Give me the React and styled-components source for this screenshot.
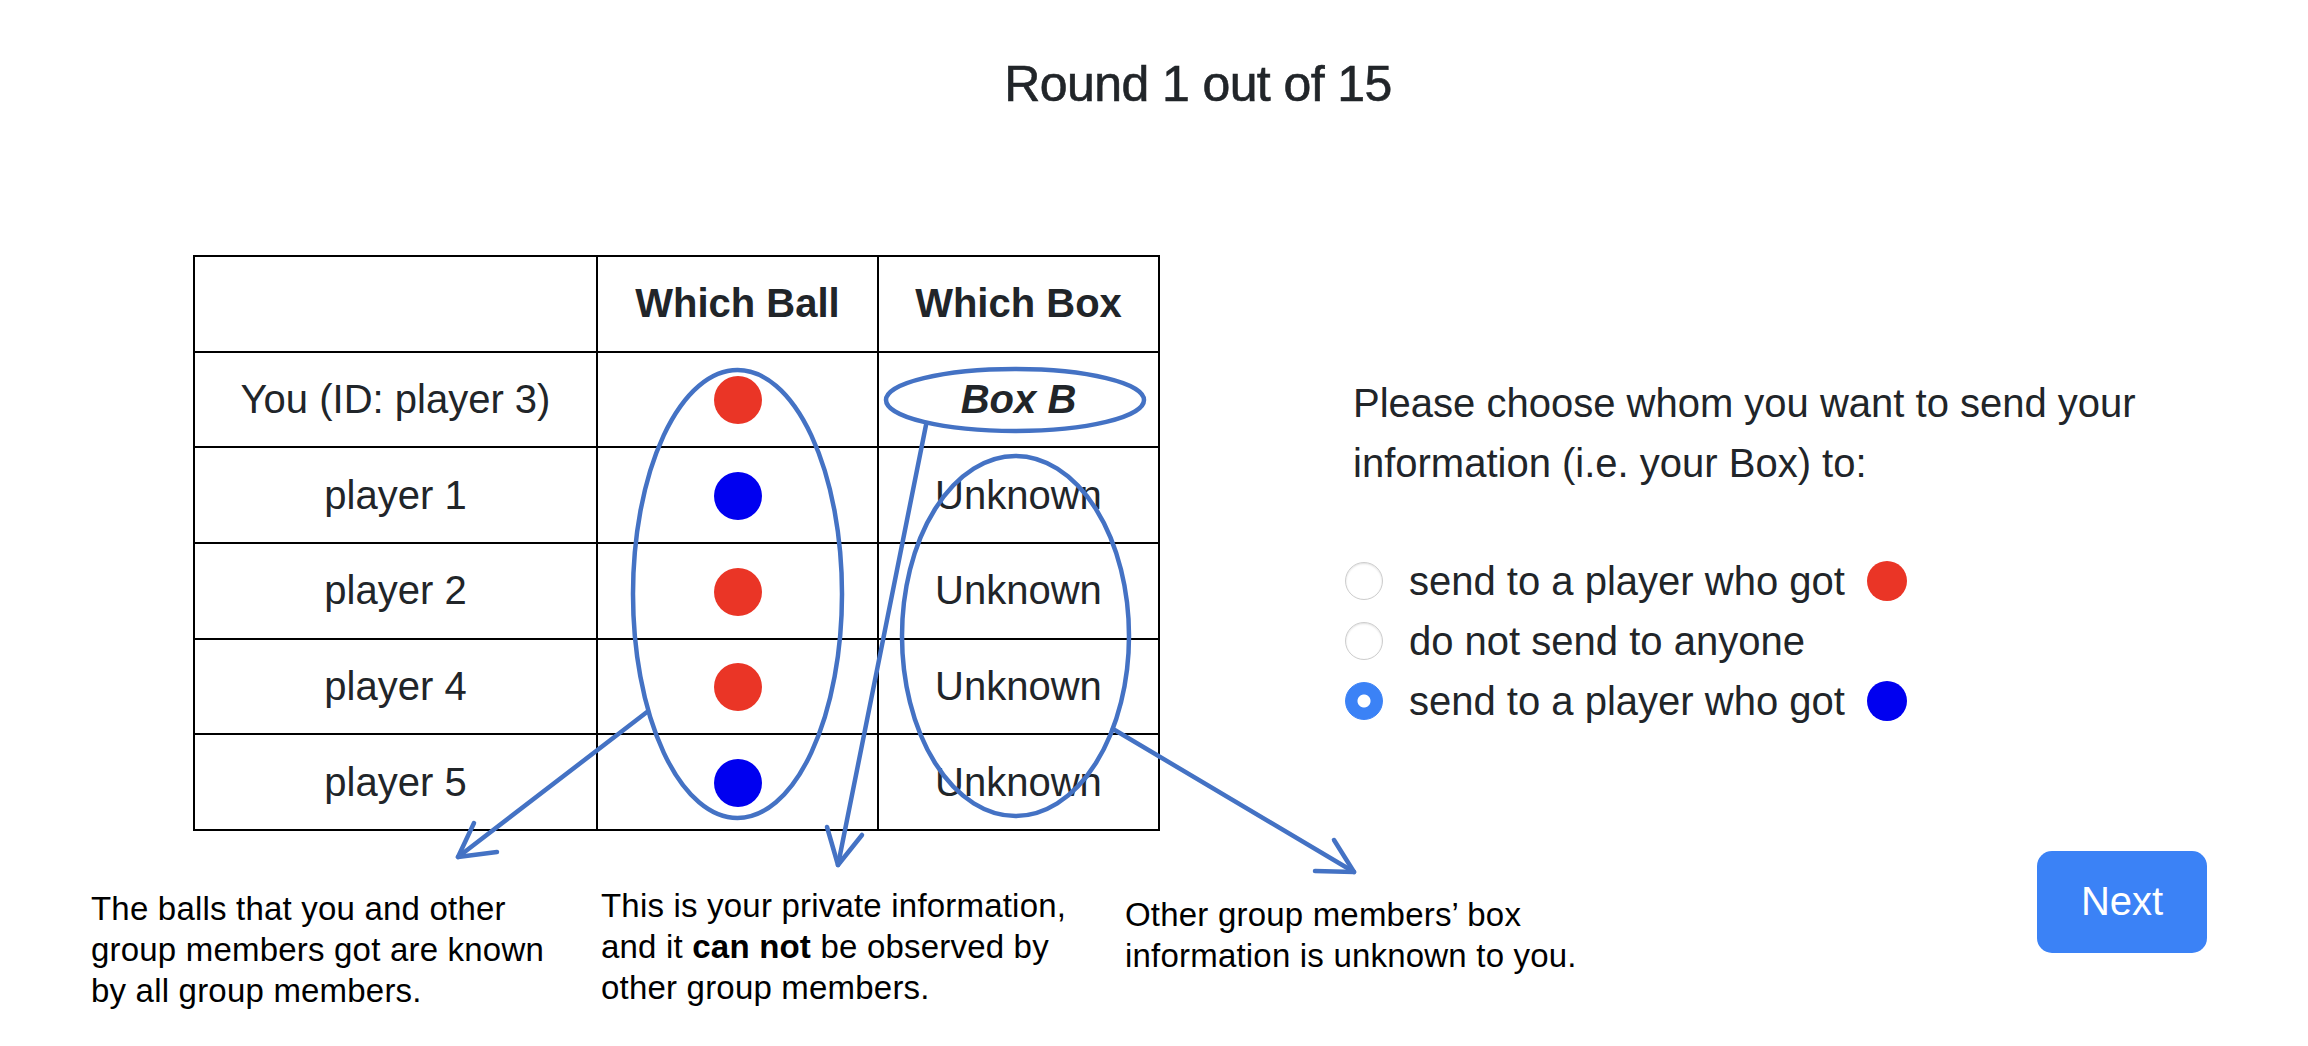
import React from 'react';
import styled, { createGlobalStyle } from 'styled-components';

const players = [
  { name: 'You (ID: player 3)', ball: '#ea3526', box: 'Box B', own: true },
  { name: 'player 1', ball: '#0000f0', box: 'Unknown' },
  { name: 'player 2', ball: '#ea3526', box: 'Unknown' },
  { name: 'player 4', ball: '#ea3526', box: 'Unknown' },
  { name: 'player 5', ball: '#0000f0', box: 'Unknown' },
];

const options = [
  { id: 'red', label: 'send to a player who got', dot: '#ea3526' },
  { id: 'none', label: 'do not send to anyone' },
  { id: 'blue', label: 'send to a player who got', dot: '#0000f0' },
];

function Overlay() {
  const blue = '#4472c4';
  return (
    <Annotations width='2308' height='1046' viewBox='0 0 2308 1046'>
      <g fill='none' stroke={blue} strokeWidth='4.5' strokeLinecap='round' strokeLinejoin='round'>
        <ellipse cx='737.5' cy='594' rx='104.5' ry='224' />
        <ellipse cx='1015' cy='400' rx='129' ry='31' />
        <ellipse cx='1015.5' cy='636' rx='113.5' ry='180' />
        {/* ball column -> note 1 */}
        <line x1='647' y1='712' x2='458' y2='857' />
        <polyline points='474,823 458,857 497,852' />
        {/* Box B -> note 2 */}
        <line x1='926' y1='425' x2='838' y2='865' />
        <polyline points='827,827 838,865 862,835' />
        {/* unknown column -> note 3 */}
        <line x1='1113' y1='729' x2='1354' y2='872' />
        <polyline points='1334,840 1354,872 1315,871' />
      </g>
    </Annotations>
  );
}

function App() {
  const [choice, setChoice] = React.useState('blue');
  return (
    <Page>
      <GlobalStyle />
      <Title>Round 1 out of 15</Title>
      <Main>
        <Table>
          <colgroup>
            <Col $w={403} />
            <Col $w={281} />
            <Col $w={281} />
          </colgroup>
          <thead>
            <Row>
              <HeadCell />
              <HeadCell>Which Ball</HeadCell>
              <HeadCell>Which Box</HeadCell>
            </Row>
          </thead>
          <tbody>
            {players.map((p) => (
              <Row key={p.name}>
                <Cell>{p.name}</Cell>
                <Cell>
                  <Ball $color={p.ball} />
                </Cell>
                <Cell>{p.own ? <OwnBox>{p.box}</OwnBox> : p.box}</Cell>
              </Row>
            ))}
          </tbody>
        </Table>
        <Panel>
          <Prompt>
            Please choose whom you want to send your
            <br />
            information (i.e. your Box) to:
          </Prompt>
          {options.map((o) => (
            <Option key={o.id}>
              <Radio
                type='radio'
                name='send'
                checked={choice === o.id}
                onChange={() => setChoice(o.id)}
              />
              <span>{o.label}</span>
              {o.dot && <OptionDot $color={o.dot} />}
            </Option>
          ))}
        </Panel>
      </Main>
      <Bottom>
        <Note $left={91} $top={37} $w={510}>
          The balls that you and other
          <br />
          group members got are known
          <br />
          by all group members.
        </Note>
        <Note $top={34} $w={524}>
          This is your private information,
          <br />
          and it <b>can not</b> be observed by
          <br />
          other group members.
        </Note>
        <Note $top={43} $grow>
          Other group members’ box
          <br />
          information is unknown to you.
        </Note>
        <NextButton>Next</NextButton>
      </Bottom>
      <Overlay />
    </Page>
  );
}

export default App;

//-----Styled Components-----
const GlobalStyle = createGlobalStyle`
  html, body {
    margin: 0;
    padding: 0;
    background: #fff;
  }
  body {
    font-family: "Liberation Sans", Arial, sans-serif;
    color: #212529;
  }
`;

const Page = styled.div`
  position: relative;
  width: 2308px;
  height: 1046px;
  overflow: hidden;
`;

const Title = styled.h3`
  margin: 0;
  padding: 54px 0 0 88px;
  font-size: 50px;
  line-height: 60px;
  font-weight: 400;
  letter-spacing: -0.6px;
  text-align: center;
  -webkit-text-stroke: 0.6px #212529;
`;

const Main = styled.div`
  display: flex;
  align-items: flex-start;
  margin-top: 141px;
  padding-left: 193px;
`;

const Table = styled.table`
  border-collapse: collapse;
  table-layout: fixed;
  width: 965px;
  font-size: 40px;
`;

const Col = styled.col`
  width: ${(props) => props.$w}px;
`;

const Row = styled.tr`
  height: 95.67px;
`;

const Cell = styled.td`
  border: 2px solid #000;
  padding: 0;
  text-align: center;
  vertical-align: middle;
  white-space: nowrap;
`;

const HeadCell = styled(Cell).attrs({ as: 'th' })`
  font-weight: 700;
`;

const Ball = styled.span`
  display: inline-block;
  width: 48px;
  height: 48px;
  border-radius: 50%;
  background: ${(props) => props.$color};
  vertical-align: middle;
`;

const OwnBox = styled.span`
  font-weight: 700;
  font-style: italic;
`;

const Panel = styled.div`
  margin-left: 193px;
  padding-top: 118px;
  font-size: 40px;
  line-height: 60px;
`;

const Prompt = styled.p`
  margin: 0 0 58px 0;
  white-space: nowrap;
`;

const Option = styled.label`
  display: flex;
  align-items: center;
  height: 60px;
  margin-left: -8px;
  white-space: nowrap;
`;

const Radio = styled.input`
  appearance: none;
  -webkit-appearance: none;
  box-sizing: border-box;
  width: 38px;
  height: 38px;
  margin: 0 26px 0 0;
  border-radius: 50%;
  border: 1.5px solid #cdcdcd;
  background: #fff;
  box-shadow: inset 0 1px 2px rgba(0, 0, 0, 0.12);
  &:checked {
    border-color: #3b82f6;
    background: radial-gradient(circle, #fff 0 6px, #3b82f6 7px);
    box-shadow: none;
  }
`;

const OptionDot = styled.span`
  display: inline-block;
  width: 40px;
  height: 40px;
  margin-left: 22px;
  border-radius: 50%;
  background: ${(props) => props.$color};
`;

const Bottom = styled.div`
  display: flex;
  align-items: flex-start;
  margin-top: 20px;
`;

const Note = styled.div`
  margin-left: ${(props) => props.$left || 0}px;
  margin-top: ${(props) => props.$top}px;
  width: ${(props) => (props.$w ? `${props.$w}px` : 'auto')};
  flex: ${(props) => (props.$grow ? 1 : 'none')};
  font-size: 33px;
  line-height: 41px;
  letter-spacing: 0.2px;
  color: #000;
  white-space: nowrap;
  b {
    font-weight: 700;
  }
`;

const NextButton = styled.button`
  width: 170px;
  height: 102px;
  margin-right: 101px;
  border: none;
  border-radius: 15px;
  background: #3b82f6;
  color: #fff;
  font-family: "Liberation Sans", Arial, sans-serif;
  font-size: 40px;
  cursor: pointer;
`;

const Annotations = styled.svg`
  position: absolute;
  top: 0;
  left: 0;
  pointer-events: none;
`;
